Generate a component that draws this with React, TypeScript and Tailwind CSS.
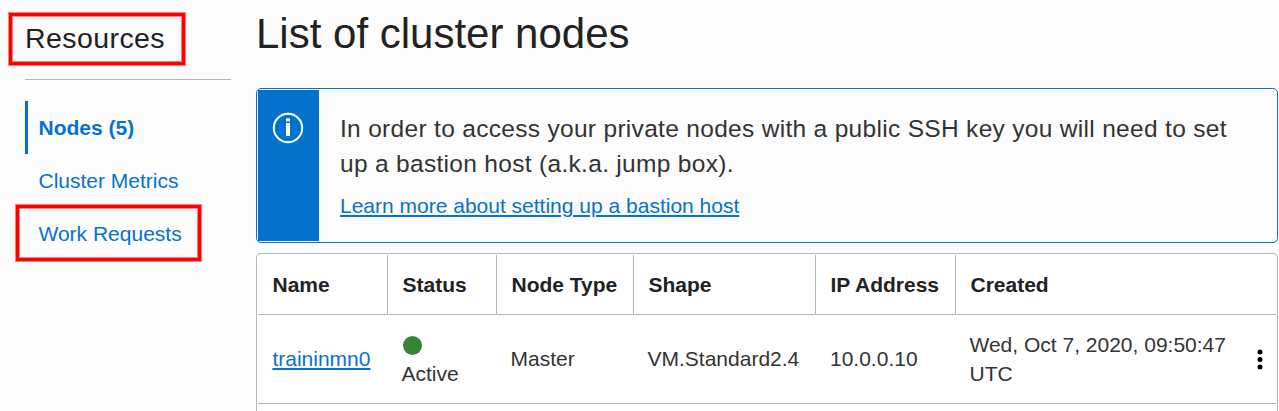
import React from "react";

const columns = ["Name", "Status", "Node Type", "Shape", "IP Address", "Created"];

const grid = "grid grid-cols-[130px_109px_137px_182px_140px_1fr]";

function Highlight({ className }: { className: string }) {
  return (
    <span
      className={`pointer-events-none absolute border-3 border-[#ff0000] shadow-[0_0_0_1px_#ff000080,inset_0_0_0_1px_#ff000080] ${className}`}
    />
  );
}

function Sidebar() {
  return (
    <aside className="w-[206px] shrink-0 text-[21px] text-[#0572ce]">
      <div className="relative h-20 border-b border-[#b0b5c0]">
        <h2 className="pt-[21px] text-[28.5px] leading-[34px] tracking-[0.42px] text-[#222]">Resources</h2>
        <Highlight className="top-[13px] -left-4 h-[52px] w-[176px]" />
      </div>
      <nav className="mt-[21px] flex flex-col">
        <a className="flex h-[53px] items-center border-l-3 border-[#0572ce] pl-[10.5px] font-bold">Nodes (5)</a>
        <a className="flex h-[53px] items-center pl-[13.5px]">Cluster Metrics</a>
        <a className="relative flex h-[53px] items-center pl-[13.5px]">
          Work Requests
          <Highlight className="-top-[2px] -left-[9px] h-[56px] w-[185px]" />
        </a>
      </nav>
    </aside>
  );
}

function Notice() {
  return (
    <section className="mt-[18px] flex h-[155px] rounded-[5px] border border-[#0572ce] p-px">
      <div className="flex w-[61px] shrink-0 bg-[#0572ce] pt-[22px] pl-[14px]">
        <svg width="32" height="32" viewBox="0 0 32 32" fill="none">
          <circle cx="16" cy="16" r="14.2" stroke="#fff" strokeWidth="2" />
          <path d="M14 6.5h4v3h-4zM14 11h4v13h-4z" fill="#fff" />
        </svg>
      </div>
      <div className="pt-[21px] pl-[21px]">
        <p className="w-[900px] text-[24.5px] leading-[35px] tracking-[0.31px] text-[#333]">
          In order to access your private nodes with a public SSH key you will need to set up a bastion host (a.k.a. jump box).
        </p>
        <a className="mt-[10px] block text-[21px] leading-[30px] text-[#0572ce] underline decoration-2 underline-offset-[2px]">
          Learn more about setting up a bastion host
        </a>
      </div>
    </section>
  );
}

function NodesTable() {
  return (
    <section className="mt-[10px] h-[200px] rounded-t-[5px] border border-b-0 border-[#b0b5bd] bg-white px-px pt-px text-[21px]">
      <div className={`${grid} h-[60px] border-b border-[#b0b5bd] font-bold text-[#222]`}>
        {columns.map((name) => (
          <div key={name} className="flex items-center border-r border-[#b0b5bd] pl-[14.5px] whitespace-nowrap last:border-r-0">
            {name}
          </div>
        ))}
      </div>
      <div className={`${grid} h-[89px] items-center border-b border-[#b0b5bd] leading-[29px] text-[#333]`}>
        <div className="pb-[2px] pl-[14.4px]">
          <a className="text-[#0572ce] underline decoration-2 underline-offset-[2px]">traininmn0</a>
        </div>
        <div className="pl-[13.5px]">
          <div className="flex h-[29px] items-center pt-px pl-[1.5px]">
            <span className="size-[19px] rounded-full bg-[#348537]" />
          </div>
          Active
        </div>
        <div className="pb-[2px] pl-[13.5px]">Master</div>
        <div className="pb-[2px] pl-[13.5px]">VM.Standard2.4</div>
        <div className="pb-[2px] pl-[14px]">10.0.0.10</div>
        <div className="flex items-center justify-between pr-[13px] pl-[13.5px]">
          <div className="w-[270px]">Wed, Oct 7, 2020, 09:50:47 UTC</div>
          <svg width="6" height="21" viewBox="0 0 6 21" fill="#000">
            <circle cx="3" cy="2.9" r="2.5" />
            <circle cx="3" cy="10.5" r="2.5" />
            <circle cx="3" cy="18.1" r="2.5" />
          </svg>
        </div>
      </div>
    </section>
  );
}

export default function App() {
  return (
    <div className="flex h-[411px] w-[1279px] gap-[25px] overflow-hidden bg-[#fcfcfc] pr-px pl-[25px] font-['Liberation_Sans',Arial,sans-serif]">
      <Sidebar />
      <main className="min-w-0 flex-1">
        <h1 className="h-[70px] pt-[10px] text-[42px] leading-[48px] text-[#222]">List of cluster nodes</h1>
        <Notice />
        <NodesTable />
      </main>
    </div>
  );
}
